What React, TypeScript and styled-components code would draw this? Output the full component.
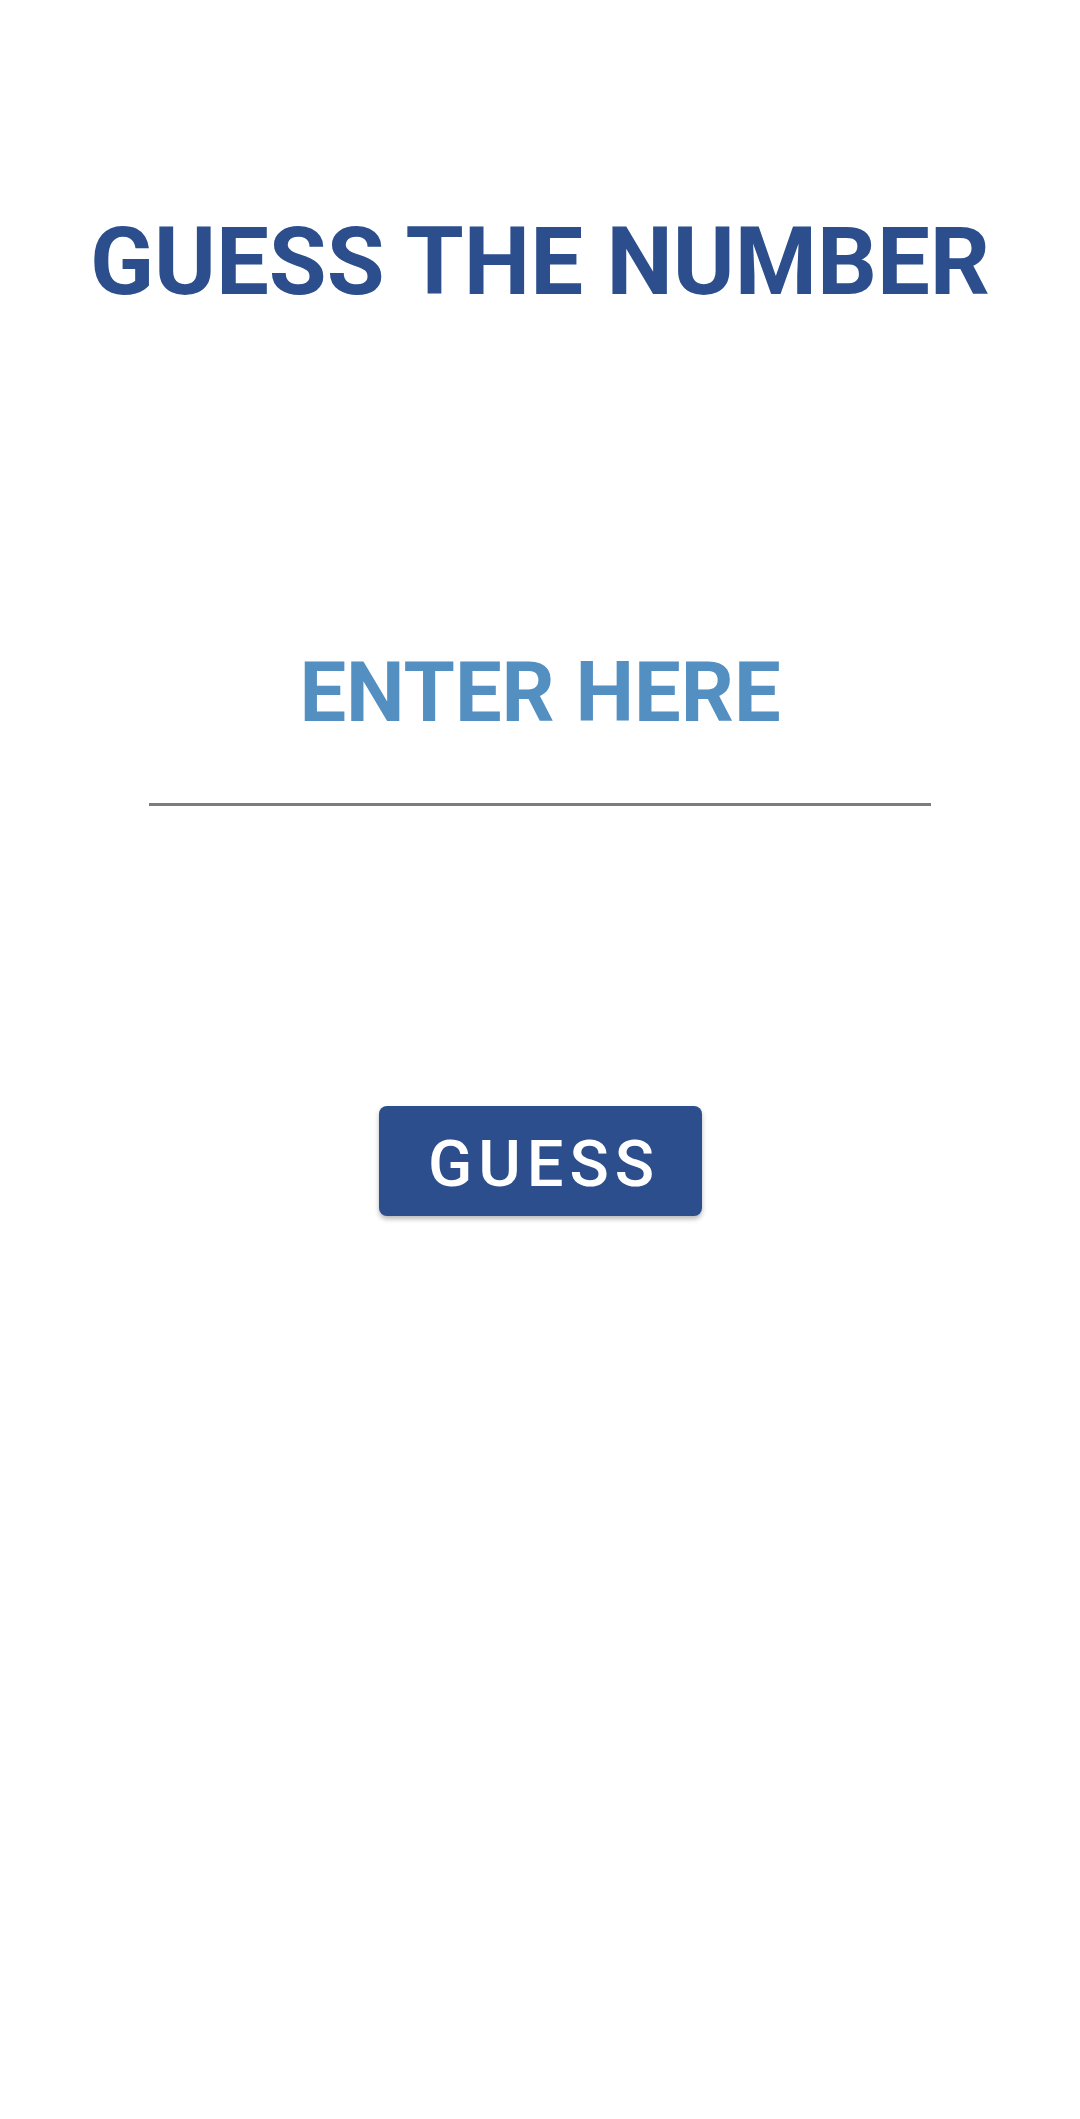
import React from "react";
import styled, { createGlobalStyle } from "styled-components";

const GlobalStyle = createGlobalStyle`
  html, body {
    margin: 0;
    padding: 0;
    background: #ffffff;
  }
  body {
    font-family: Roboto, "Noto Sans", "Liberation Sans", sans-serif;
  }
`;

const Screen = styled.main`
  min-height: 2119px;
  display: flex;
  flex-direction: column;
  align-items: center;
  padding-top: 208px;
  box-sizing: border-box;
`;

const Title = styled.h1`
  margin: 0;
  font-family: Roboto, "Liberation Sans", sans-serif;
  font-weight: 700;
  font-size: 94px;
  line-height: 109px;
  color: #2c4e8c;
  text-align: center;
  white-space: nowrap;
`;

const GuessField = styled.input`
  margin-top: 326px;
  width: 782px;
  box-sizing: border-box;
  padding: 0 0 62px;
  border: none;
  border-bottom: 3px solid #7c7c7c;
  outline: none;
  background: transparent;
  font-family: Roboto, "Liberation Sans", sans-serif;
  font-weight: 700;
  font-size: 83px;
  line-height: 98px;
  height: 163px;
  color: #2c4e8c;
  text-align: center;

  &::placeholder {
    color: #548fc1;
    opacity: 1;
  }
`;

const GuessButton = styled.button`
  margin-top: 300px;
  width: 323px;
  height: 110px;
  box-sizing: border-box;
  padding: 6px 0 0 8px;
  display: flex;
  align-items: center;
  justify-content: center;
  border: none;
  border-radius: 8px;
  background: #2c4e8c;
  box-shadow: 0 3px 5px rgba(0, 0, 0, 0.28);
  color: #ffffff;
  font-family: Roboto, "Liberation Sans", sans-serif;
  font-weight: 500;
  font-size: 65px;
  line-height: normal;
  letter-spacing: 6px;
  cursor: pointer;
`;

export default function App() {
  return (
    <>
      <GlobalStyle />
      <Screen>
        <Title>GUESS THE NUMBER</Title>
        <GuessField type="text" placeholder="ENTER HERE" />
        <GuessButton type="button">GUESS</GuessButton>
      </Screen>
    </>
  );
}
